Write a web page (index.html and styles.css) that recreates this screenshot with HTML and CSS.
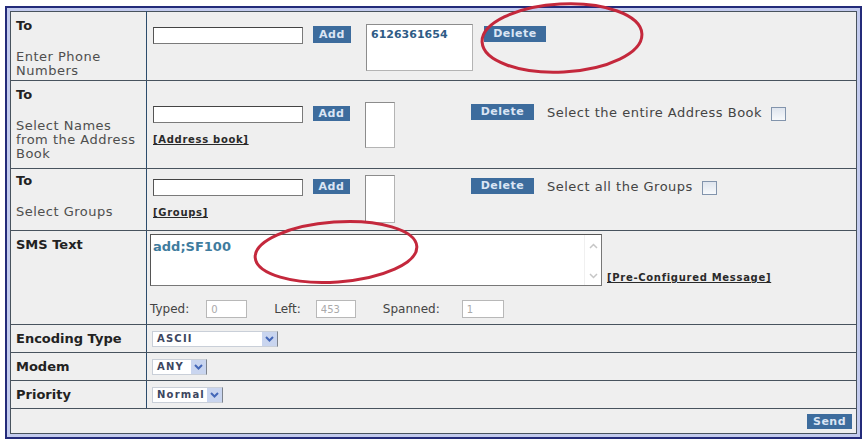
FILE: index.html
```html
<!DOCTYPE html>
<html lang="en">
<head>
  <meta charset="UTF-8">
  <meta name="viewport" content="width=device-width, initial-scale=1.0">
  <title>Send SMS</title>
  <link rel="stylesheet" href="styles.css">
</head>
<body>
  <div class="frame">
    <table class="sms-form">
      <colgroup><col class="col-label"><col></colgroup>

      <!-- phone numbers -->
      <tr class="row-phone">
        <td class="label"><b>To</b><span class="sub">Enter Phone Numbers</span></td>
        <td class="field">
          <div class="line">
            <input type="text" class="txt">
            <button class="btn add">Add</button>
            <div class="listbox wide"><div class="opt">6126361654</div></div>
            <button class="btn del">Delete</button>
          </div>
        </td>
      </tr>

      <!-- address book -->
      <tr class="row-book">
        <td class="label"><b>To</b><span class="sub">Select Names from the Address Book</span></td>
        <td class="field">
          <div class="line">
            <div class="stack">
              <input type="text" class="txt">
              <a href="#" class="link">[Address book]</a>
            </div>
            <button class="btn add">Add</button>
            <div class="listbox"></div>
            <button class="btn del">Delete</button>
            <span class="pick">Select the entire Address Book</span>
            <input type="checkbox" class="check">
          </div>
        </td>
      </tr>

      <!-- groups -->
      <tr class="row-groups">
        <td class="label tight"><b>To</b><span class="sub">Select Groups</span></td>
        <td class="field">
          <div class="line">
            <div class="stack">
              <input type="text" class="txt">
              <a href="#" class="link">[Groups]</a>
            </div>
            <button class="btn add">Add</button>
            <div class="listbox tall"></div>
            <button class="btn del">Delete</button>
            <span class="pick">Select all the Groups</span>
            <input type="checkbox" class="check">
          </div>
        </td>
      </tr>

      <!-- message -->
      <tr class="row-text">
        <td class="label"><b>SMS Text</b></td>
        <td class="field text-field">
          <div class="sms">
            <div class="textbox">
              <textarea class="msg">add;SF100</textarea>
              <div class="scroll">
                <svg width="9" height="6" viewBox="0 0 9 6"><path d="M1 5 L4.5 1.5 L8 5" /></svg>
                <svg width="9" height="6" viewBox="0 0 9 6"><path d="M1 1 L4.5 4.5 L8 1" /></svg>
              </div>
            </div>
            <a href="#" class="link preset">[Pre-Configured Message]</a>
          </div>
          <div class="counts">
            <span>Typed:</span><input type="text" class="count typed" value="0" disabled>
            <span class="gap">Left:</span><input type="text" class="count left" value="453" disabled>
            <span class="gap">Spanned:</span><input type="text" class="count spanned" value="1" disabled>
          </div>
        </td>
      </tr>

      <tr class="row-opt">
        <td class="label mid"><b>Encoding Type</b></td>
        <td class="field mid">
          <div class="select enc"><span class="val">ASCII</span><span class="arrow"><svg width="9" height="6" viewBox="0 0 9 6"><path d="M1 1 L4.5 4.5 L8 1" /></svg></span></div>
        </td>
      </tr>
      <tr class="row-opt">
        <td class="label mid"><b>Modem</b></td>
        <td class="field mid">
          <div class="select modem"><span class="val">ANY</span><span class="arrow"><svg width="9" height="6" viewBox="0 0 9 6"><path d="M1 1 L4.5 4.5 L8 1" /></svg></span></div>
        </td>
      </tr>
      <tr class="row-opt">
        <td class="label mid"><b>Priority</b></td>
        <td class="field mid">
          <div class="select prio"><span class="val">Normal</span><span class="arrow"><svg width="9" height="6" viewBox="0 0 9 6"><path d="M1 1 L4.5 4.5 L8 1" /></svg></span></div>
        </td>
      </tr>

      <tr class="row-send">
        <td colspan="2" class="send-cell"><button class="btn send">Send</button></td>
      </tr>
    </table>
  </div>

  <!-- red annotation marks drawn over the form -->
  <svg class="marks" width="865" height="440" viewBox="0 0 865 440">
    <ellipse cx="562" cy="38" rx="80" ry="34" transform="rotate(-3 562 38)" />
    <ellipse cx="336" cy="252" rx="81" ry="30" transform="rotate(-4 336 252)" />
  </svg>
</body>
</html>
```

FILE: styles.css
```css
body {
  margin: 0;
  position: relative;
  font-family: 'DejaVu Sans', Verdana, sans-serif;
  font-size: 12px;
  color: #444;
  background: #fff;
}
.frame {
  margin: 6px 3px 2px 5px;
  border: 2px solid #242b7a;
  padding: 3px;
  background: #c3cbee;
}
.sms-form {
  width: 100%;
  border-collapse: collapse;
  background: #efefef;
}
.sms-form td {
  border: 1px solid #48535e;
  padding: 0;
  vertical-align: top;
}
.col-label { width: 136px; }

.row-phone { height: 69px; }
.row-book { height: 88px; }
.row-groups { height: 62px; }
.row-text { height: 94px; }
.row-opt { height: 28px; }
.row-send { height: 25px; }

/* label column */
.sms-form td.label {
  padding: 6px 10px 0 5px;
  border-right-color: #2c4c6c;
  line-height: 15px;
}
.sms-form td.label.tight { padding-top: 4px; }
.sms-form td.label.mid,
.sms-form td.field.mid {
  vertical-align: middle;
  padding-top: 0;
}
.label b {
  display: block;
  font-size: 13px;
  color: #222;
}
.label .sub {
  display: block;
  margin-top: 17px;
  font-size: 13px;
  letter-spacing: 0.5px;
  line-height: 14px;
  color: #4e4e4e;
}

/* value column */
.sms-form td.field { padding-left: 6px; }
.sms-form td.field.mid { padding-left: 5px; }
.line {
  display: flex;
  align-items: flex-start;
}
.row-phone .line { padding-top: 12px; }
.row-book .line { padding-top: 21px; }
.row-groups .line { padding-top: 6px; }

.stack {
  display: flex;
  flex-direction: column;
  align-items: flex-start;
  margin-top: 4px;
}
.txt {
  box-sizing: border-box;
  width: 150px;
  height: 17px;
  margin: 0;
  border: 1px solid #7a7a7a;
  border-top-color: #444;
  border-left-color: #555;
  background: #fff;
}
.row-phone .txt { margin-top: 3px; }
.link {
  margin-top: 10px;
  font-size: 10px;
  font-weight: bold;
  letter-spacing: 0.7px;
  line-height: 13px;
  color: #2a2a2a;
}

.btn {
  box-sizing: border-box;
  height: 16px;
  margin: 0;
  padding: 0;
  border: none;
  background: #3d6c9d;
  color: #dbe5f4;
  font-family: 'DejaVu Sans', Verdana, sans-serif;
  font-size: 11px;
  font-weight: bold;
  letter-spacing: 0.5px;
  line-height: 16px;
}
.add {
  width: 37px;
  height: 15px;
  line-height: 15px;
  margin: 4px 0 0 10px;
}
.row-phone .add {
  width: 38px;
  height: 17px;
  line-height: 17px;
  margin-top: 2px;
}
.del {
  width: 63px;
  margin: 2px 0 0 76px;
}
.row-phone .del {
  width: 62px;
  margin-left: 11px;
}
.row-groups .del { margin-top: 3px; }

.listbox {
  box-sizing: border-box;
  width: 30px;
  height: 46px;
  margin-left: 15px;
  border: 1px solid #b4b4b4;
  border-top-color: #8c8c8c;
  border-left-color: #8c8c8c;
  background: #fff;
}
.listbox.wide {
  width: 107px;
  height: 47px;
}
.listbox.tall { height: 48px; }
.opt {
  padding: 3px 0 0 4px;
  font-size: 11px;
  font-weight: bold;
  color: #2f5c86;
}

.pick {
  margin: 3px 0 0 13px;
  font-size: 13px;
  letter-spacing: 0.5px;
  line-height: 15px;
}
.row-groups .pick { margin-top: 4px; }
.check {
  appearance: none;
  box-sizing: border-box;
  width: 15px;
  height: 14px;
  margin: 5px 0 0 9px;
  border: 1px solid #8294ac;
  background: linear-gradient(#dfe5ee, #f7f9fb);
}
.row-groups .check { margin-top: 6px; }

/* sms text */
.sms-form td.text-field { padding: 3px 0 0 3px; }
.sms {
  display: flex;
  align-items: flex-end;
}
.textbox {
  box-sizing: border-box;
  display: flex;
  width: 452px;
  height: 52px;
  border: 1px solid #555;
  border-right-color: #777;
  border-bottom-color: #777;
  background: #fff;
}
.msg {
  flex: 1;
  margin: 0;
  padding: 3px 2px;
  border: none;
  resize: none;
  outline: none;
  font-family: 'DejaVu Sans', Verdana, sans-serif;
  font-size: 13px;
  font-weight: bold;
  line-height: 17px;
  color: #3f7c9e;
}
.scroll {
  display: flex;
  flex-direction: column;
  justify-content: space-between;
  align-items: center;
  width: 16px;
  padding: 8px 0 6px;
  border-left: 1px solid #f0f0f0;
}
.scroll path {
  fill: none;
  stroke: #c6c6c6;
  stroke-width: 1.5;
}
.preset { margin: 0 0 2px 5px; }

.counts {
  display: flex;
  align-items: center;
  margin-top: 14px;
}
.counts .gap { margin-left: 27px; }
.count {
  box-sizing: border-box;
  height: 18px;
  margin: 0;
  padding: 0 0 0 4px;
  border: 1px solid #b8b8b8;
  background: #fff;
  font-family: 'DejaVu Sans', Verdana, sans-serif;
  font-size: 10px;
  color: #aaa;
}
.typed { width: 41px; margin-left: 17px; }
.left { width: 40px; margin-left: 15px; }
.spanned { width: 42px; margin-left: 22px; }

/* drop downs */
.select {
  box-sizing: border-box;
  display: flex;
  align-items: stretch;
  height: 16px;
  border: 1px solid #c9cfd8;
  border-right-color: #7d838c;
  background: #fff;
}
.select .val {
  padding-left: 4px;
  font-size: 10px;
  font-weight: bold;
  letter-spacing: 1.2px;
  line-height: 14px;
  color: #3d4660;
}
.select .arrow {
  display: flex;
  align-items: center;
  justify-content: center;
  width: 15px;
  margin-left: auto;
  background: #c9d5ef;
}
.select .arrow path {
  fill: none;
  stroke: #4467b8;
  stroke-width: 2;
}
.enc { width: 126px; }
.modem { width: 55px; }
.prio { width: 71px; }

.sms-form td.send-cell {
  vertical-align: middle;
  text-align: right;
  padding-right: 4px;
}
.send {
  width: 45px;
  height: 15px;
  line-height: 15px;
  display: inline-block;
  vertical-align: middle;
}

/* annotation overlay */
.marks {
  position: absolute;
  top: 0;
  left: 0;
  pointer-events: none;
}
.marks ellipse {
  fill: none;
  stroke: #c4283c;
  stroke-width: 3;
}
```
